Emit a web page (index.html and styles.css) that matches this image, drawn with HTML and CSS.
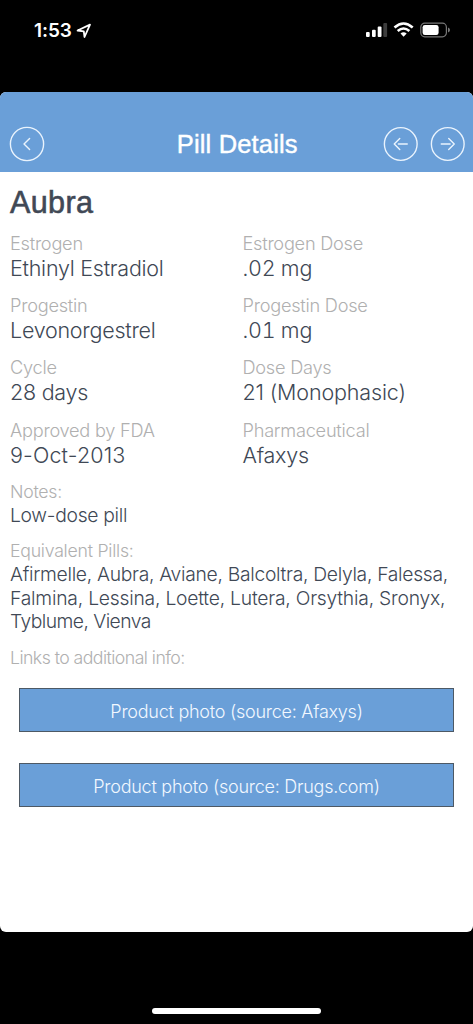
FILE: index.html
```html
<!DOCTYPE html>
<html lang="en">
<head>
<meta charset="utf-8">
<title>Pill Details</title>
<link rel="stylesheet" href="styles.css">
</head>
<body>
<div class="phone">
  <div class="status">
    <div class="clock"><span class="time">1:53</span>
      <svg class="location" width="16" height="16" viewBox="0 0 16 16"><path d="M1.6 7.5 14 1.6 8.5 14 7.8 8.3Z"/></svg>
    </div>
    <svg class="indicators" width="88" height="18" viewBox="0 0 88 18">
      <g fill="#fff"><rect x="1" y="11" width="3.7" height="5" rx="1"/><rect x="7" y="8.7" width="3.7" height="7.3" rx="1"/><rect x="12.7" y="5.5" width="3.8" height="10.5" rx="1"/></g>
      <rect x="18.3" y="2" width="3.8" height="14" rx="1" fill="#3c3c3c"/>
      <g fill="none" stroke="#fff" stroke-width="2.6"><path d="M29.5 6.5Q38.5-1.5 47.7 6.5"/><path d="M32.7 10Q38.5 5 44.4 10"/></g>
      <path fill="#fff" d="M35.5 12.5Q38.5 10 41.7 12.5L38.6 15.8Z"/>
      <rect x="55.8" y="2.2" width="25.6" height="13.6" rx="4" fill="none" stroke="#777" stroke-width="1.2"/>
      <rect x="57.6" y="4" width="16" height="10" rx="2.3" fill="#fff"/>
      <path d="M83 6.6Q85 7.2 85 9Q85 10.8 83 11.4Z" fill="#777"/>
    </svg>
  </div>
  <main class="card">
    <header class="navbar">
      <svg class="round" viewBox="0 0 36 36"><circle cx="18" cy="18" r="16.6"/><path d="M20.6 12.4 15 18l5.6 5.6"/></svg>
      <h1 class="title">Pill Details</h1>
      <div class="pager">
        <svg class="round" viewBox="0 0 36 36"><circle cx="18" cy="18" r="16.6"/><path d="M17 12.4 11.4 18l5.6 5.6M15.6 18h9"/></svg>
        <svg class="round" viewBox="0 0 36 36"><circle cx="18" cy="18" r="16.6"/><path d="M19 12.4 24.6 18 19 23.6M20.4 18h-9"/></svg>
      </div>
    </header>
    <section class="details">
      <h2 class="name">Aubra</h2>
      <dl class="facts">
        <div class="fact"><dt>Estrogen</dt><dd>Ethinyl Estradiol</dd></div>
        <div class="fact"><dt>Estrogen Dose</dt><dd class="dose">.02 mg</dd></div>
        <div class="fact"><dt>Progestin</dt><dd>Levonorgestrel</dd></div>
        <div class="fact"><dt>Progestin Dose</dt><dd class="dose">.01 mg</dd></div>
        <div class="fact"><dt>Cycle</dt><dd>28 days</dd></div>
        <div class="fact"><dt>Dose Days</dt><dd class="days">21 (Monophasic)</dd></div>
        <div class="fact"><dt>Approved by FDA</dt><dd class="date">9-Oct-2013</dd></div>
        <div class="fact"><dt>Pharmaceutical</dt><dd>Afaxys</dd></div>
      </dl>
      <dl class="extra">
        <dt>Notes:</dt><dd>Low-dose pill</dd>
        <dt>Equivalent Pills:</dt><dd>Afirmelle, Aubra, Aviane, Balcoltra, Delyla, Falessa,<br><span class="loose">Falmina, Lessina, Loette, Lutera, Orsythia, Sronyx,</span><br><span class="tight">Tyblume, Vienva</span></dd>
        <dt class="last">Links to additional info:</dt>
      </dl>
      <div class="links">
        <button class="link">Product photo (source: Afaxys)</button>
        <button class="link">Product photo (source: Drugs.com)</button>
      </div>
    </section>
  </main>
  <div class="home"></div>
</div>
</body>
</html>
```
FILE: styles.css
```css
* { box-sizing: border-box; }
body, h1, h2, dl, dt, dd { margin: 0; }
body { background: #000; font-family: Inter, "Liberation Sans", sans-serif; }
.phone { width: 473px; height: 1024px; display: flex; flex-direction: column; overflow: hidden; background: #000; }
.status { height: 92px; flex: none; padding: 21px 20px 0 34px; display: flex; justify-content: space-between; align-items: flex-start; color: #fff; }
.clock { display: flex; gap: 4px; align-items: center; height: 20px; }
.time { font-size: 19px; font-weight: 600; letter-spacing: -0.1px; line-height: 20px; }
.location { fill: none; stroke: #fff; stroke-width: 1.8; stroke-linejoin: round; }
.card { height: 840px; flex: none; background: #fff; border-radius: 6px; overflow: hidden; }
.navbar { height: 80px; background: #6a9fd8; display: grid; grid-template-columns: 83px 1fr 83px; align-items: center; padding: 24px 7.5px 0 9px; }
.round { width: 36px; height: 36px; display: block; fill: none; stroke: #e9f3fd; stroke-width: 1.4; stroke-linecap: round; stroke-linejoin: round; }
.title { text-align: center; color: #fff; font: 400 25.5px/28px "Liberation Sans", sans-serif; -webkit-text-stroke: 0.4px #fff; letter-spacing: 0.15px; padding-bottom: 1px; }
.pager { display: flex; gap: 12px; justify-content: flex-end; }
.details { padding: 11px 10px 0; color: #404855; }
.name { font: 400 30.5px/38px "Liberation Sans", sans-serif; -webkit-text-stroke: 0.6px #404855; letter-spacing: 0.4px; }
.facts { display: grid; grid-template-columns: 232.5px 1fr; grid-auto-rows: 62.2px; padding-top: 10px; }
.fact dt, .extra dt { color: #b0b0b0; font-weight: 300; font-size: 18.2px; line-height: 24px; letter-spacing: -0.25px; white-space: nowrap; }
.extra dt { font-size: 17.7px; }
.extra .last { letter-spacing: -0.55px; }
.fact dd { font-weight: 300; font-size: 21.5px; line-height: 26px; letter-spacing: -0.25px; white-space: nowrap; }
.fact .dose { font-variant-numeric: tabular-nums; }
.fact .days { letter-spacing: -0.15px; }
.fact .date { letter-spacing: 0.15px; }
.extra dd { font-weight: 300; font-size: 19.3px; line-height: 23.7px; letter-spacing: -0.3px; white-space: nowrap; padding-bottom: 11.5px; }
.loose { letter-spacing: -0.22px; }
.tight { letter-spacing: -0.55px; }
.links { display: flex; flex-direction: column; gap: 31px; padding: 18.5px 9px 0; }
.link { height: 44px; border: 1px solid #4d5965; background: #6a9fd8; color: #f2f8ff; font: 300 18px/24px Inter, sans-serif; letter-spacing: -0.25px; padding: 3px 0 0; }
.home { width: 169px; height: 6px; border-radius: 3px; background: #fff; margin: 76px 0 0 152px; }
```
